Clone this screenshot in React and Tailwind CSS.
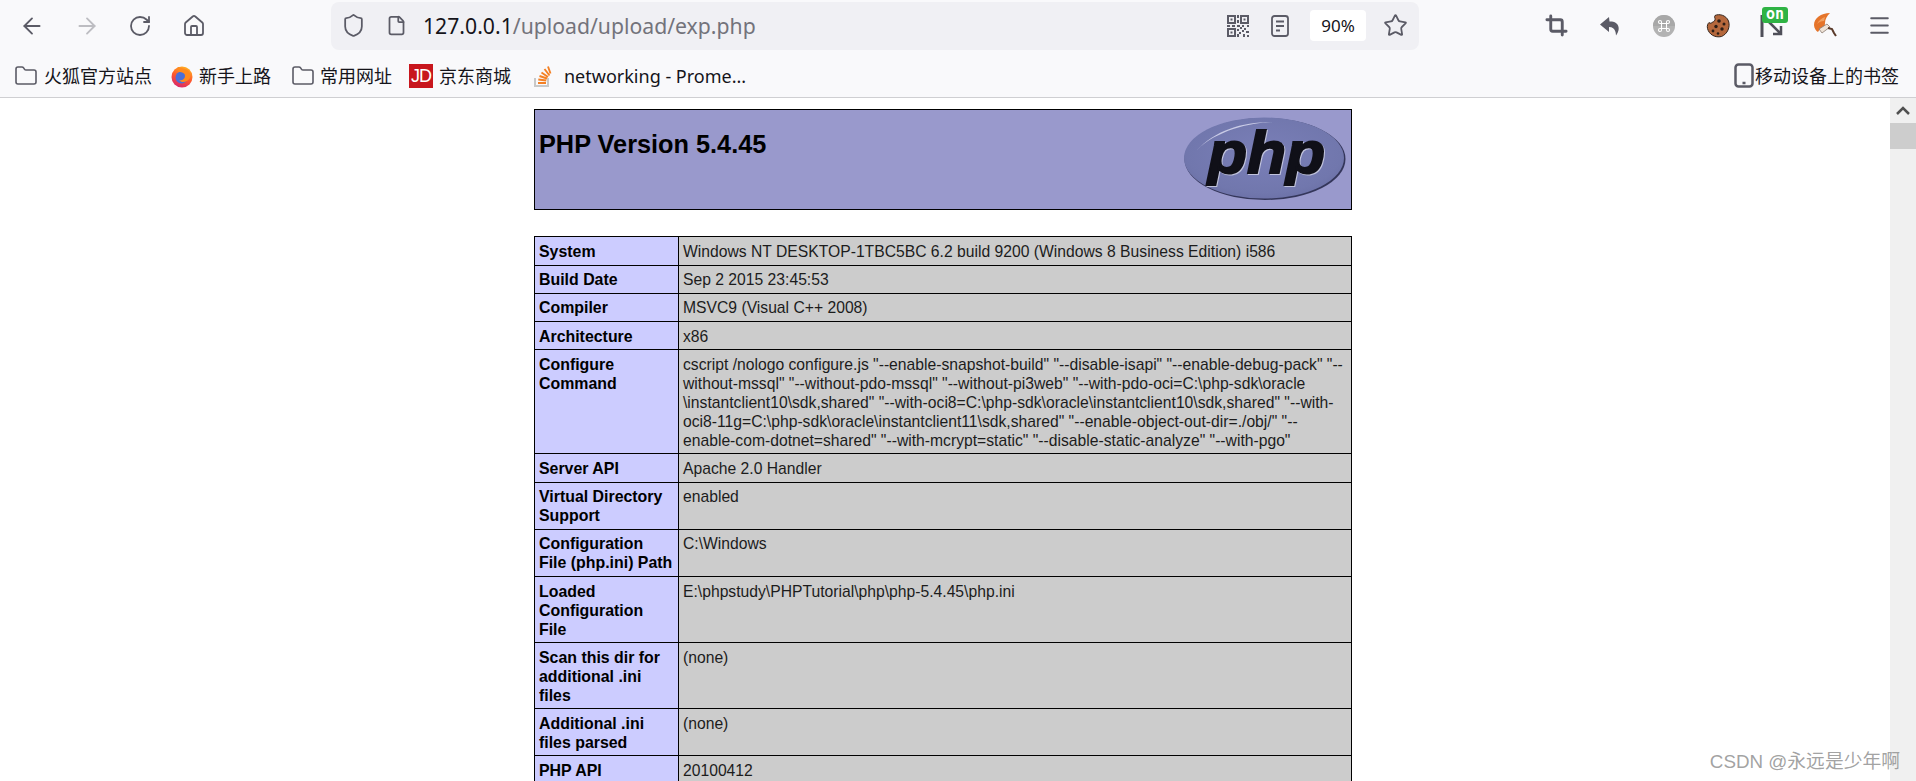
import { ArrowLeft, ArrowRight, RotateCw, Home, Shield, File, Star, Menu, Crop, Folder } from 'lucide-react'

const rows = [
  { label: ['System'], value: ['Windows NT DESKTOP-1TBC5BC 6.2 build 9200 (Windows 8 Business Edition) i586'], h: 'h-[29px]', pt: 'pt-[5px]' },
  { label: ['Build Date'], value: ['Sep 2 2015 23:45:53'], h: 'h-[28px]', pt: 'pt-[4px]' },
  { label: ['Compiler'], value: ['MSVC9 (Visual C++ 2008)'], h: 'h-[28px]', pt: 'pt-[4px]' },
  { label: ['Architecture'], value: ['x86'], h: 'h-[28px]', pt: 'pt-[5px]' },
  {
    label: ['Configure', 'Command'],
    value: [
      'cscript /nologo configure.js "--enable-snapshot-build" "--disable-isapi" "--enable-debug-pack" "--',
      'without-mssql" "--without-pdo-mssql" "--without-pi3web" "--with-pdo-oci=C:\\php-sdk\\oracle',
      '\\instantclient10\\sdk,shared" "--with-oci8=C:\\php-sdk\\oracle\\instantclient10\\sdk,shared" "--with-',
      'oci8-11g=C:\\php-sdk\\oracle\\instantclient11\\sdk,shared" "--enable-object-out-dir=./obj/" "--',
      'enable-com-dotnet=shared" "--with-mcrypt=static" "--disable-static-analyze" "--with-pgo"',
    ],
    h: 'h-[104px]',
    pt: 'pt-[5px]',
  },
  { label: ['Server API'], value: ['Apache 2.0 Handler'], h: 'h-[29px]', pt: 'pt-[5px]' },
  { label: ['Virtual Directory', 'Support'], value: ['enabled'], h: 'h-[47px]', pt: 'pt-[4px]' },
  { label: ['Configuration', 'File (php.ini) Path'], value: ['C:\\Windows'], h: 'h-[47px]', pt: 'pt-[4px]' },
  { label: ['Loaded', 'Configuration', 'File'], value: ['E:\\phpstudy\\PHPTutorial\\php\\php-5.4.45\\php.ini'], h: 'h-[66px]', pt: 'pt-[5px]' },
  { label: ['Scan this dir for', 'additional .ini', 'files'], value: ['(none)'], h: 'h-[66px]', pt: 'pt-[5px]' },
  { label: ['Additional .ini', 'files parsed'], value: ['(none)'], h: 'h-[47px]', pt: 'pt-[5px]' },
  { label: ['PHP API'], value: ['20100412'], h: 'h-[28px]', pt: 'pt-[5px]' },
]

function Lines({ items }) {
  return items.map((line, i) => (
    <div key={i} className="whitespace-nowrap">{line}</div>
  ))
}

function QrIcon() {
  return (
    <svg width="22" height="22" viewBox="0 0 22 22" fill="#5b5b66">
      <path fillRule="evenodd" d="M0 0h9v9H0zM2 2v5h5V2zM13 0h9v9h-9zM15 2v5h5V2zM0 13h9v9H0zM2 15v5h5v-5z" />
      <path d="M3.500 3.500h2v2h-2zM16.500 3.500h2v2h-2zM3.500 16.500h2v2h-2zM10 0h2v3h-2zM10 5h2v3h-2zM0 10h3v2H0zM5 10h3v2H5zM10 10h3v2h-3zM15 10h2v2h-2zM20 10h2v2h-2zM10 14h2v2h-2zM13 12h2v2h-2zM17 13h2v2h-2zM12 17h2v2h-2zM15 15h2v2h-2zM19 16h3v2h-3zM10 19h2v3h-2zM16 19h2v3h-2zM20 20h2v2h-2z" />
    </svg>
  )
}

function ReaderIcon() {
  return (
    <svg width="18" height="22" viewBox="0 0 18 22" fill="none" stroke="#5b5b66" strokeWidth="1.800">
      <rect x="1" y="1" width="16" height="20" rx="2.500" />
      <path d="M5 6.500h8M5 11h8M5 15.500h4" />
    </svg>
  )
}

function UndoIcon() {
  return (
    <svg width="22" height="22" viewBox="0 0 22 22" fill="#5b5b66">
      <path d="M10 2 1 9.500l9 7.500v-5c3.500 0 5.500 1.500 6.500 5 .2 1 .5 2.500.5 3.500 3-4 3.500-8 1.500-11-1.800-2.500-4.500-3-8-3z" />
    </svg>
  )
}

function CmdIcon() {
  return (
    <svg width="22" height="22" viewBox="0 0 22 22">
      <circle cx="11" cy="11" r="11" fill="#b3b3b3" />
      <path d="M0 11a11 11 0 0 1 22 0z" fill="#a8a8a8" />
      <path d="M8.500 8.500h5v5h-5zM8.500 8.500H7a1.500 1.500 0 1 1 1.500-1.500zM13.500 8.500V7A1.500 1.500 0 1 1 15 8.500zM8.500 13.500V15A1.500 1.500 0 1 1 7 13.500zM13.500 13.500H15A1.500 1.500 0 1 1 13.500 15z" fill="none" stroke="#fff" strokeWidth="1.100" />
    </svg>
  )
}

function CookieIcon() {
  return (
    <svg width="24" height="24" viewBox="0 0 24 24">
      <path d="M9 1.500C13-.5 20 1 22.500 7c2 6-1 13-7 15.500C9 24 3 20.500 1.500 14.500.8 11.500 2 9.500 3 8.500c1 1.200 3 1 3.500-.5 1.500 0 3-2 2.500-3.500-.5-1-.5-2 0-3z" fill="#b5683c" stroke="#33241c" strokeWidth="1" />
      <circle cx="13" cy="7" r="1.800" fill="#2b1d16" />
      <circle cx="18" cy="10" r="1.500" fill="#2b1d16" />
      <circle cx="10" cy="12.500" r="1.700" fill="#2b1d16" />
      <circle cx="16" cy="15" r="1.700" fill="#2b1d16" />
      <circle cx="7" cy="17" r="1.400" fill="#2b1d16" />
      <circle cx="12" cy="19.500" r="1.300" fill="#2b1d16" />
    </svg>
  )
}

function OnBadgeIcon() {
  return (
    <div className="relative w-[26px] h-[24px]">
      <svg width="26" height="24" viewBox="0 0 26 24" fill="none" stroke="#4f4f59">
        <path d="M2 1v22" strokeWidth="3" />
        <path d="M9 8l12 12M21 12v8h-8" strokeWidth="2.500" />
      </svg>
      <span className="absolute left-[2px] top-[-7px] w-[26px] h-[16px] rounded-[3px] bg-[#2fb344] text-white text-[15px] leading-[14px] text-center font-bold font-['DejaVu_Sans_Mono',monospace]">on</span>
    </div>
  )
}

function BrushIcon() {
  return (
    <svg width="24" height="26" viewBox="0 0 24 26">
      <path d="M17 0C8 0 1 5 1 12c0 3 2 6 4 7 1-2 2-3 4-4 2-1 3-2 3-5 0-4 2-7 5-10z" fill="#e5742a" />
      <path d="M12 4c-3 1-6 3-8 7 2-2 4-3 7-3z" fill="#f0a060" />
      <path d="M6 16l8-5 3 3-8 6z" fill="#eee2d6" stroke="#8a7a70" strokeWidth=".8" />
      <path d="M15 15l4 1 2 4 2 3" fill="none" stroke="#5a3a2a" strokeWidth="2" />
    </svg>
  )
}

function FirefoxIcon() {
  return (
    <svg width="24" height="24" viewBox="0 0 24 24">
      <defs>
        <linearGradient id="ff" x1="0.700" y1="0" x2="0.300" y2="1">
          <stop offset="0" stopColor="#ffb321" />
          <stop offset="0.500" stopColor="#ff5a2b" />
          <stop offset="1" stopColor="#d6246e" />
        </linearGradient>
      </defs>
      <circle cx="12" cy="13" r="10.500" fill="url(#ff)" />
      <circle cx="11.500" cy="13.500" r="6" fill="#4a6fd8" />
      <path d="M8 3c-1 2-1 4 1 5 3 0 6 1 6 4s-3 5-6 4c2 3 8 3 11-2 1-4-1-8-5-9-3-1-5-1-7-2z" fill="#ff8a1e" />
    </svg>
  )
}

function JdIcon() {
  return (
    <div className="w-[24px] h-[24px] bg-[#c8161d] text-white text-[18px] leading-[24px] tracking-[-1px] text-center font-['Liberation_Sans',sans-serif]">JD</div>
  )
}

function StackIcon() {
  return (
    <svg width="20" height="24" viewBox="0 0 20 24" fill="none">
      <path d="M3 14v8h13v-8" stroke="#c8c8c8" strokeWidth="2" />
      <path d="M6 19h8M6.300 15.500l8 1M7.500 12l7.500 2.500M9.500 8.500l6.500 4.500M12.500 5l5 6.500M16 2.500l2.500 7" stroke="#f48024" strokeWidth="1.900" />
    </svg>
  )
}

function PhpLogo() {
  return (
    <svg width="164" height="86" viewBox="0 0 164 86">
      <defs>
        <radialGradient id="phpfill" cx="0.500" cy="0.450" r="0.600">
          <stop offset="0" stopColor="#7a7fb8" />
          <stop offset="0.800" stopColor="#7177ad" />
          <stop offset="1" stopColor="#6a6fa5" />
        </radialGradient>
      </defs>
      <ellipse cx="82" cy="43" rx="80.500" ry="41" fill="#34365a" />
      <ellipse cx="81" cy="42" rx="80" ry="40.500" fill="url(#phpfill)" />
      <path d="M14 34C32 14 62 5 92 6 70 6 34 14 14 34z" fill="#c9cbe6" />
      <text x="83.500" y="57" textAnchor="middle" fontFamily="Liberation Sans" fontWeight="700" fontStyle="italic" fontSize="60" textLength="117" lengthAdjust="spacingAndGlyphs" fill="#101018" stroke="#101018" strokeWidth="2" className="[filter:drop-shadow(1px_1px_0_rgba(255,255,255,0.55))]">php</text>
    </svg>
  )
}

function Bookmark({ icon, label, className }) {
  return (
    <div className={'flex items-center ' + className}>
      {icon}
      <span className="whitespace-nowrap">{label}</span>
    </div>
  )
}

export default function App() {
  return (
    <div className="h-screen w-full flex flex-col overflow-hidden bg-white font-['Liberation_Sans','Noto_Sans_CJK_SC',sans-serif]">
      <header className="h-[98px] shrink-0 bg-[#f9f9fb] border-b border-[#cfcfd2] text-[#15141a]">
        <div className="h-[51px] flex items-center text-[#5b5b66]">
          <ArrowLeft size={26} strokeWidth={1.700} className="ml-[19px]" />
          <ArrowRight size={26} strokeWidth={1.700} className="ml-[29px] text-[#bdbdc2]" />
          <RotateCw size={24} strokeWidth={1.800} className="ml-[28px]" />
          <Home size={24} strokeWidth={1.800} className="ml-[30px]" />
          <div className="ml-[125px] w-[1088px] h-[48px] rounded-[8px] bg-[#f0f0f4] flex items-center">
            <Shield size={25} strokeWidth={1.700} className="ml-[10px]" />
            <File size={21} strokeWidth={2} className="ml-[20px]" />
            <div className="ml-[16px] text-[21.200px] leading-[28px] font-['Noto_Sans',sans-serif] whitespace-nowrap">
              <span className="text-[#15141a]">127.0.0.1</span>
              <span className="text-[#73737b]">/upload/upload/exp.php</span>
            </div>
            <div className="ml-auto flex items-center">
              <QrIcon />
              <div className="ml-[22px]"><ReaderIcon /></div>
              <div className="ml-[21px] w-[56px] h-[31px] rounded-[4px] bg-white text-[#15141a] text-[17px] leading-[31px] text-center font-['Noto_Sans',sans-serif]">90%</div>
              <Star size={25} strokeWidth={1.700} className="ml-[17px] mr-[11px]" />
            </div>
          </div>
          <Crop size={23} strokeWidth={3} className="ml-[126px]" />
          <div className="ml-[31px]"><UndoIcon /></div>
          <div className="ml-[32px]"><CmdIcon /></div>
          <div className="ml-[31px]"><CookieIcon /></div>
          <div className="ml-[30px]"><OnBadgeIcon /></div>
          <div className="ml-[27px]"><BrushIcon /></div>
          <Menu size={25} strokeWidth={1.800} className="ml-[30px]" />
        </div>
        <div className="h-[46px] pt-[3px] flex items-center text-[18px] leading-[24px] text-[#15141a] font-['Noto_Sans','Noto_Sans_CJK_SC',sans-serif]">
          <Bookmark className="ml-[14px]" icon={<Folder size={24} strokeWidth={1.600} className="mr-[6px] text-[#5b5b66]" />} label="火狐官方站点" />
          <Bookmark className="ml-[18px]" icon={<div className="mr-[5px]"><FirefoxIcon /></div>} label="新手上路" />
          <Bookmark className="ml-[20px]" icon={<Folder size={24} strokeWidth={1.600} className="mr-[5px] text-[#5b5b66]" />} label="常用网址" />
          <Bookmark className="ml-[17px]" icon={<div className="mr-[6px]"><JdIcon /></div>} label="京东商城" />
          <Bookmark className="ml-[21px]" icon={<div className="mr-[12px]"><StackIcon /></div>} label="networking - Prome..." />
          <div className="ml-auto mr-[17px] flex items-center">
            <svg width="22" height="25" viewBox="0 0 22 25" fill="none" stroke="#5b5b66" strokeWidth="2.500">
              <rect x="2.500" y="1.500" width="17" height="22" rx="3" />
              <path d="M9.500 20h3" />
            </svg>
            <span className="whitespace-nowrap">移动设备上的书签</span>
          </div>
        </div>
      </header>

      <div className="relative flex-1 min-h-0 flex overflow-hidden">
        <main className="flex-1 min-w-0 overflow-hidden">
          <div className="ml-[534px] w-[818px] mt-[11px] text-black text-[15.700px] leading-[19px]">
            <div className="h-[101px] border border-black bg-[#9999cc] flex justify-between">
              <h1 className="mt-[19px] ml-[4px] text-[25.300px] leading-[30px] font-bold">PHP Version 5.4.45</h1>
              <div className="mt-[6px] mr-[4px]"><PhpLogo /></div>
            </div>
            <table className="mt-[26px] w-[818px] table-fixed border-collapse">
              <colgroup>
                <col className="w-[144px]" />
                <col />
              </colgroup>
              <tbody>
                {rows.map(r => (
                  <tr key={r.label[0]} className={r.h}>
                    <td className={'align-top border border-black bg-[#ccccff] font-bold text-[15.900px] pl-[4px] ' + r.pt}>
                      <Lines items={r.label} />
                    </td>
                    <td className={'align-top border border-black bg-[#cccccc] text-[#1c1c1c] pl-[4px] ' + r.pt}>
                      <Lines items={r.value} />
                    </td>
                  </tr>
                ))}
              </tbody>
            </table>
          </div>
        </main>
        <aside className="w-[26px] shrink-0 bg-[#f0f0f0] flex flex-col">
          <div className="h-[25px] flex items-center justify-center">
            <svg width="14" height="9" viewBox="0 0 14 9" fill="none" stroke="#505050" strokeWidth="2.500">
              <path d="M1 8l6-6 6 6" />
            </svg>
          </div>
          <div className="h-[26px] bg-[#cdcdcd]" />
        </aside>
        <div className="absolute right-[16px] bottom-[7px] text-[18.800px] leading-[24px] text-[#8a8a8a]/80 whitespace-nowrap">CSDN @永远是少年啊</div>
      </div>
    </div>
  )
}
